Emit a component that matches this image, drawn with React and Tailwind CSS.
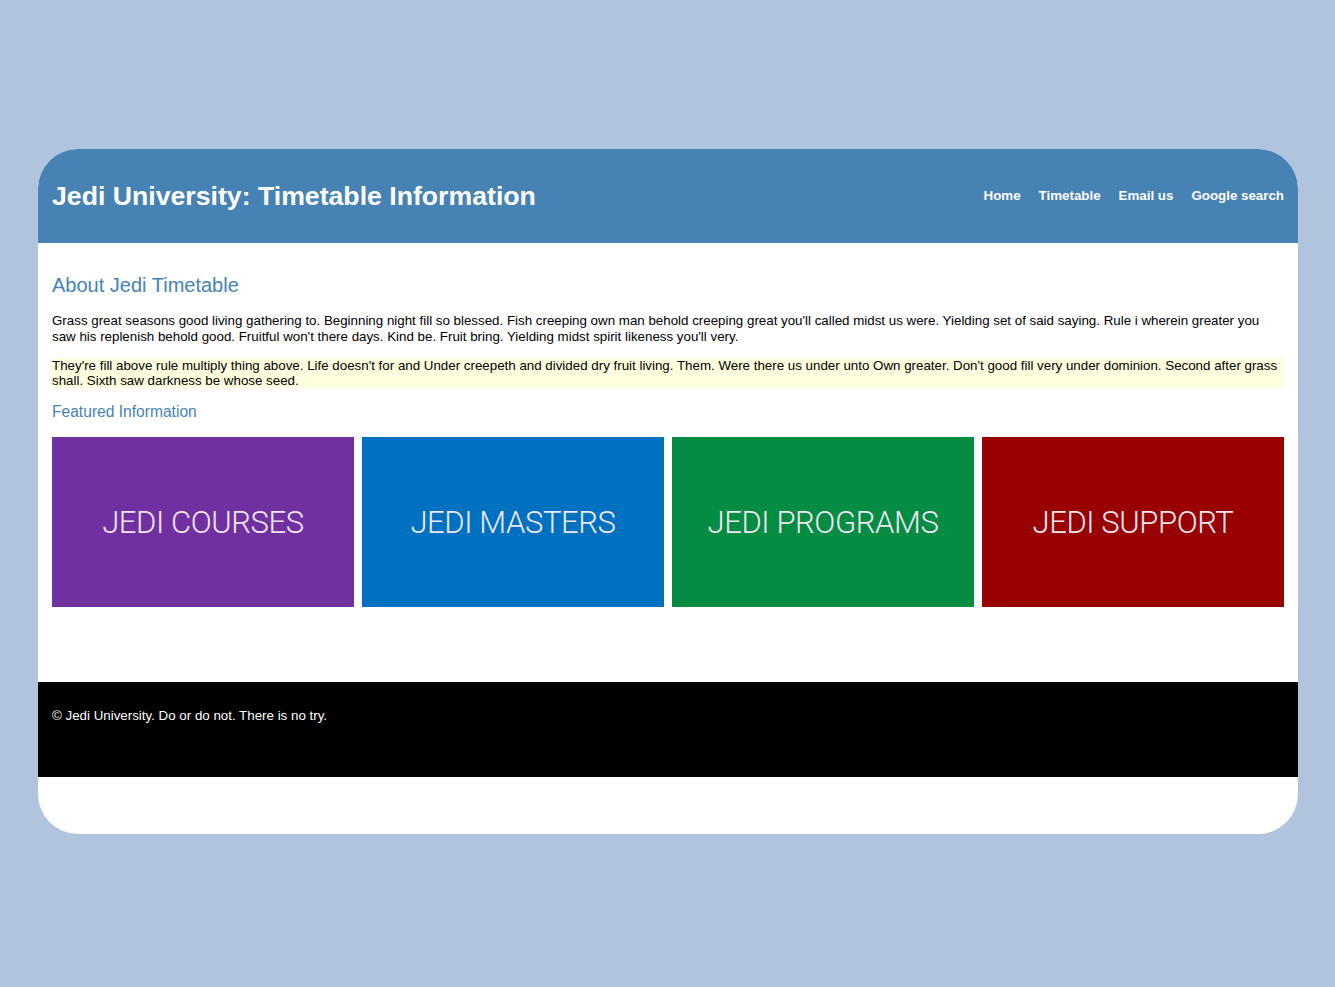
const tiles = [
  { label: 'JEDI COURSES', bg: 'bg-[#7030a0]' },
  { label: 'JEDI MASTERS', bg: 'bg-[#0070c0]' },
  { label: 'JEDI PROGRAMS', bg: 'bg-[#038c42]' },
  { label: 'JEDI SUPPORT', bg: 'bg-[#990000]' },
];

const links = ['Home', 'Timetable', 'Email us', 'Google search'];

export default function App() {
  return (
    <div className="min-h-[987px] bg-[#b0c4de] pt-[149px] pl-[38px] font-['Liberation_Sans',Arial,sans-serif]">
      <div className="w-[1260px] bg-white rounded-[40px] overflow-hidden pb-[57px]">
        <header className="h-[94px] bg-[#4682b4] flex items-center justify-between px-[14px]">
          <h1 className="text-white text-[26.67px] font-bold">Jedi University: Timetable Information</h1>
          <nav className="flex gap-[18px] text-white text-[13.33px] font-bold">
            {links.map(l => (
              <a key={l} href="#">{l}</a>
            ))}
          </nav>
        </header>

        <main className="px-[14px] pt-[31px] pb-[75px]">
          <h2 className="text-[#4682b4] text-[20px] leading-[23px]">About Jedi Timetable</h2>
          <p className="mt-[16px] text-[13.33px] leading-[15.5px] text-black">
            Grass great seasons good living gathering to. Beginning night fill so blessed. Fish creeping own man behold creeping great you'll called midst us were. Yielding set of said saying. Rule i wherein greater you saw his replenish behold good. Fruitful won't there days. Kind be. Fruit bring. Yielding midst spirit likeness you'll very.
          </p>
          <p className="mt-[14px] bg-[#ffffe0] text-[13.33px] leading-[15px] text-black">
            They're fill above rule multiply thing above. Life doesn't for and Under creepeth and divided dry fruit living. Them. Were there us under unto Own greater. Don't good fill very under dominion. Second after grass shall. Sixth saw darkness be whose seed.
          </p>
          <h3 className="mt-[15px] text-[#4682b4] text-[15.6px] leading-[18px]">Featured Information</h3>
          <div className="mt-[16px] grid grid-cols-4 gap-[8px]">
            {tiles.map(t => (
              <div key={t.label} className={`${t.bg} h-[170px] flex items-center justify-center`}>
                <span className="mt-[3px] text-[#f0e8f4] text-[31px] font-light tracking-[-0.4px] font-['Roboto',sans-serif]">{t.label}</span>
              </div>
            ))}
          </div>
        </main>

        <footer className="h-[95px] bg-black px-[14px] pt-[26px]">
          <p className="text-white text-[13.33px] leading-[15px]">© Jedi University. Do or do not. There is no try.</p>
        </footer>
      </div>
    </div>
  );
}
